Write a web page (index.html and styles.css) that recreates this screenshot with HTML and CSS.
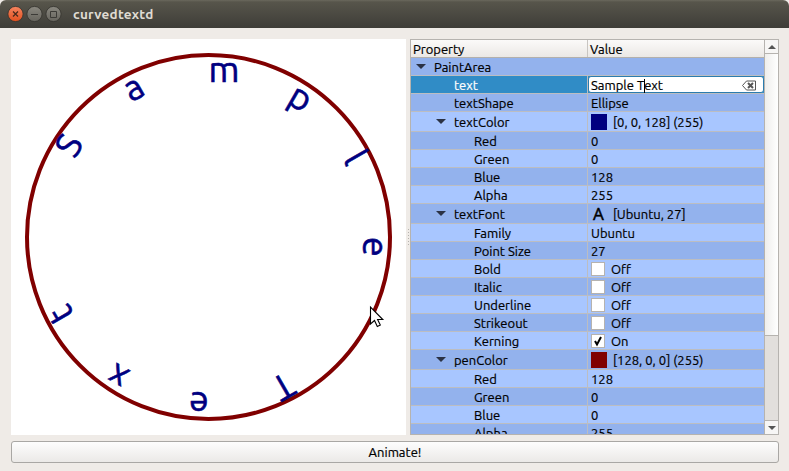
FILE: index.html
```
<!DOCTYPE html>
<html lang="en">
<head>
<meta charset="utf-8">
<title>curvedtextd</title>
<link rel="stylesheet" href="styles.css">
</head>
<body>
<div class="window">
  <header class="titlebar">
    <svg class="controls" width="56" height="18" viewBox="0 0 56 18">
      <defs>
        <linearGradient id="close" x1="0" y1="0" x2="0" y2="1"><stop offset="0" stop-color="#f58560"/><stop offset="1" stop-color="#e2501e"/></linearGradient>
        <linearGradient id="grey" x1="0" y1="0" x2="0" y2="1"><stop offset="0" stop-color="#8a8880"/><stop offset="1" stop-color="#66645d"/></linearGradient>
      </defs>
      <circle cx="8.5" cy="9" r="7.6" fill="url(#close)" stroke="#33322d" stroke-width=".8"/>
      <circle cx="27.5" cy="9" r="7.6" fill="url(#grey)" stroke="#33322d" stroke-width=".8"/>
      <circle cx="46.5" cy="9" r="7.6" fill="url(#grey)" stroke="#33322d" stroke-width=".8"/>
      <path d="M6 6.500l5 5M11 6.500l-5 5" stroke="#4a2a1c" stroke-width="1.300"/>
      <path d="M24 9.500h7M43.500 6.500h6v6h-6z" fill="none" stroke="#3c3b37"/>
    </svg>
    <span class="title">curvedtextd</span>
  </header>
  <main class="content">
    <div class="panes">
      <svg class="canvas" width="395" height="396" viewBox="11 39 395 396">
        <ellipse cx="208.5" cy="237" rx="181.5" ry="182" fill="none" stroke="#800000" stroke-width="4"/>
        <g class="curved">
          <text transform="translate(51.3 146) rotate(-60)" y="27">S</text>
          <text transform="translate(117.7 79.4) rotate(-30)" y="27">a</text>
          <text transform="translate(208.500 55)" y="27" textLength="31" lengthAdjust="spacingAndGlyphs">m</text>
          <text transform="translate(299.3 79.4) rotate(30)" y="27">p</text>
          <text transform="translate(365.7 146) rotate(60)" y="27">l</text>
          <text transform="translate(390 237) rotate(90)" y="27">e</text>
          <text transform="translate(299.3 394.6) rotate(150)" y="27">T</text>
          <text transform="translate(208.500 419) rotate(180)" y="27">e</text>
          <text transform="translate(117.7 394.6) rotate(210)" y="27">x</text>
          <text transform="translate(51.3 328) rotate(240)" y="27">t</text>
        </g>
        <path d="M370.500 307v17l4-3.500 2.800 6 3-1.400-2.700-5.600h5.200z" fill="#fff" stroke="#000" stroke-width="1.100"/>
      </svg>
      <div class="splitter"><i></i><i></i><i></i><i></i><i></i><i></i></div>
      <div class="tree">
        <div class="table">
          <div class="head"><span class="key">Property</span><span class="val">Value</span></div>
          <div class="rows">
            <div class="row dark group"><span class="key l0"><i class="arrow"></i>PaintArea</span></div>
            <div class="row selected"><span class="key l1">text</span><span class="val"><span class="edit">Sample T<i class="caret"></i>ext
              <svg class="clear" width="15" height="11" viewBox="0 0 15 11"><path d="M4.500 1h9v9h-9l-4-4.500z" fill="none" stroke="#555"/><path d="M6 3l5 5M11 3l-5 5" stroke="#555" stroke-width="2"/></svg></span></span></div>
            <div class="row dark"><span class="key l1">textShape</span><span class="val">Ellipse</span></div>
            <div class="row tall"><span class="key l1"><i class="arrow"></i>textColor</span><span class="val"><i class="swatch navy"></i>[0, 0, 128] (255)</span></div>
            <div class="row dark"><span class="key l2">Red</span><span class="val">0</span></div>
            <div class="row"><span class="key l2">Green</span><span class="val">0</span></div>
            <div class="row dark"><span class="key l2">Blue</span><span class="val">128</span></div>
            <div class="row"><span class="key l2">Alpha</span><span class="val">255</span></div>
            <div class="row dark tall"><span class="key l1"><i class="arrow"></i>textFont</span><span class="val"><b class="glyph">A</b>[Ubuntu, 27]</span></div>
            <div class="row"><span class="key l2">Family</span><span class="val">Ubuntu</span></div>
            <div class="row dark"><span class="key l2">Point Size</span><span class="val">27</span></div>
            <div class="row"><span class="key l2">Bold</span><span class="val"><i class="check"></i>Off</span></div>
            <div class="row dark"><span class="key l2">Italic</span><span class="val"><i class="check"></i>Off</span></div>
            <div class="row"><span class="key l2">Underline</span><span class="val"><i class="check"></i>Off</span></div>
            <div class="row dark"><span class="key l2">Strikeout</span><span class="val"><i class="check"></i>Off</span></div>
            <div class="row"><span class="key l2">Kerning</span><span class="val"><i class="check"><svg width="12" height="12" viewBox="0 0 12 12"><path d="M3 6l2 3.500L9 2" fill="none" stroke="#000" stroke-width="2"/></svg></i>On</span></div>
            <div class="row dark tall"><span class="key l1"><i class="arrow"></i>penColor</span><span class="val"><i class="swatch maroon"></i>[128, 0, 0] (255)</span></div>
            <div class="row"><span class="key l2">Red</span><span class="val">128</span></div>
            <div class="row dark"><span class="key l2">Green</span><span class="val">0</span></div>
            <div class="row"><span class="key l2">Blue</span><span class="val">0</span></div>
            <div class="row dark"><span class="key l2">Alpha</span><span class="val">255</span></div>
          </div>
        </div>
        <div class="scrollbar">
          <div class="step up"><svg width="8" height="4"><path d="M0 4L4 0l4 4z" fill="#555"/></svg></div>
          <div class="thumb"></div>
          <div class="trough"></div>
          <div class="step down"><svg width="8" height="4"><path d="M0 0h8L4 4z" fill="#555"/></svg></div>
        </div>
      </div>
    </div>
    <button class="animate">Animate!</button>
  </main>
</div>
</body>
</html>
```
FILE: styles.css
```
* { box-sizing: border-box; }
body {
  margin: 0;
  background: #efebe7;
  color: #000;
  font: 13px "Ubuntu", "Noto Sans", sans-serif;
  -webkit-text-stroke: 0.2px;
}
.window { width: 789px; height: 471px; overflow: hidden; background: #efebe7; }
.titlebar {
  display: flex;
  align-items: center;
  height: 28px;
  padding-left: 7px;
  background: linear-gradient(#6a685d 0, #57554b 2px, #3e3d38 100%);
  border-radius: 6px 6px 0 0;
}
.title { margin-left: 10px; color: #dfdbd2; font-size: 13.5px; font-weight: 700; letter-spacing: 0.25px; -webkit-text-stroke: 0; }
.content { padding: 11px 10px 0 11px; }
.panes { display: flex; height: 396px; }
.canvas { display: block; background: #fff; flex: none; }
.curved { font-size: 35.5px; fill: #000080; stroke: #000080; stroke-width: 0.6px; -webkit-text-stroke: 0.6px #000080; }
.splitter { width: 4px; display: flex; flex-direction: column; justify-content: center; gap: 2px; padding-left: 2px; }
.splitter i { width: 1px; height: 1px; background: #b5b2ae; }
.tree { display: flex; width: 369px; height: 396px; border: 1px solid #b6b3af; background: #fff; }
.table { width: 353px; overflow: hidden; }
.head { display: flex; height: 18px; border-bottom: 1px solid #b3b0ac; background: linear-gradient(#fbfaf9, #ebe8e5); line-height: 18px; }
.head .key { padding-left: 2px; border-right: 1px solid #c8c5c1; }
.key { width: 177px; flex: none; }
.val { flex: 1; display: flex; align-items: center; padding-left: 3px; white-space: pre; }
.head .val { padding-left: 2px; }
.rows { height: 376px; overflow: hidden; }
.row { display: flex; height: 18px; border-bottom: 1px solid #bcbdc1; background: #a8c6ff; line-height: 18px; }
.row .key { border-right: 1px solid #bcbdc1; display: flex; align-items: center; }
.dark { background: #93b2ed; }
.tall { height: 20px; line-height: 20px; }
.row.group .key { border: 0; }
.l0 { padding-left: 5px; }
.l1 { padding-left: 43px; }
.l1:has(.arrow) { padding-left: 25px; }
.l2 { padding-left: 63px; }
.arrow { width: 10px; margin-right: 8px; border: 5px solid transparent; border-top-color: #2b3245; border-bottom: 0; }
.selected { background: #308cc6; }
.selected .key { color: #fff; }
.row.selected .val { padding: 0; }
.edit { position: relative; display: block; width: 176px; height: 17px; padding-left: 2px; border: 1px solid #2b7cae; border-radius: 3px; background: #fff; line-height: 16px; white-space: nowrap; }
.caret { display: inline-block; width: 1px; height: 14px; margin-right: -1px; background: #000; vertical-align: -3px; }
.clear { position: absolute; right: 6px; top: 3px; }
.swatch { width: 16px; height: 16px; margin-right: 6px; }
.navy { background: #000080; }
.maroon { background: #800000; }
.glyph { width: 22px; padding-left: 2px; font: 17px "Noto Sans", sans-serif; line-height: 18px; -webkit-text-stroke: 0.4px; }
.check { width: 14px; height: 14px; margin-right: 6px; border: 1px solid #b6b3af; background: #fff; }
.check svg { display: block; }
.scrollbar { display: flex; flex-direction: column; width: 14px; border-left: 1px solid #b6b3af; }
.step { height: 13px; flex: none; display: flex; align-items: center; justify-content: center; background: #f7f6f5; }
.thumb { height: 283px; border: solid #b6b3af; border-width: 1px 0; background: linear-gradient(90deg, #efeeec, #fff); }
.trough { flex: 1; background: #e2dfdc; }
.down { border-top: 1px solid #b6b3af; height: 14px; }
.animate {
  display: block;
  width: 768px;
  height: 22px;
  margin-top: 6px;
  padding: 0;
  border: 1px solid #a9a7a4;
  border-radius: 3px;
  background: linear-gradient(#fdfdfd, #ebe9e7);
  color: #000;
  font: inherit;
}
```
